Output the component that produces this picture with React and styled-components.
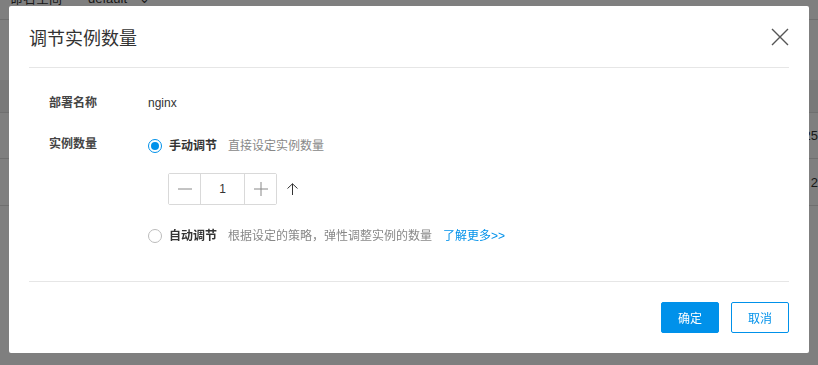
import React, { useState } from "react";
import styled, { createGlobalStyle } from "styled-components";

const GlobalStyle = createGlobalStyle`
  html, body {
    margin: 0;
    padding: 0;
    height: 100%;
    overflow: hidden;
    background: #ffffff;
    font-family: "Liberation Sans", "Noto Sans CJK SC", sans-serif;
  }
  * { box-sizing: border-box; }
`;

/* page under the mask */
const PageWrapper = styled.div`
  width: 818px;
  height: 365px;
  background: #ffffff;
  overflow: hidden;
`;

const FilterBar = styled.div`
  display: flex;
  align-items: flex-start;
  height: 20px;
  padding-left: 10px;
  border-bottom: 1px solid #dedede;
  font-size: 13px;
  color: #333;
  line-height: 14px;
`;

const FilterText = styled.span`
  margin-top: -8px;
  margin-right: ${(p) => p.mr || 0}px;
`;

const TableHead = styled.div`
  margin-top: 60px;
  height: 33px;
  background: #f2f2f2;
  border-bottom: 1px solid #dedede;
`;

const TableRow = styled.div`
  display: flex;
  justify-content: flex-end;
  align-items: center;
  height: ${(p) => p.h}px;
  border-bottom: 1px solid #dedede;
  font-size: 13px;
  color: #333;
`;

/* modal */
const Mask = styled.div`
  position: fixed;
  inset: 0;
  background: rgba(0, 0, 0, 0.5);
  display: flex;
  align-items: flex-start;
  padding: 6px 0 0 9px;
`;

const Modal = styled.div`
  width: 800px;
  height: 347px;
  background: #ffffff;
  border-radius: 2px;
  display: flex;
  flex-direction: column;
`;

const ModalHeader = styled.div`
  display: flex;
  justify-content: space-between;
  align-items: center;
  height: 62px;
  margin: 0 20px;
  border-bottom: 1px solid #e6e6e6;
`;

const Title = styled.h2`
  margin: 0;
  font-size: 18px;
  font-weight: 400;
  color: #333;
`;

const CloseButton = styled.button`
  display: flex;
  padding: 0;
  border: none;
  background: none;
  cursor: pointer;
`;

const ModalBody = styled.div`
  flex: 1;
  display: flex;
  flex-direction: column;
  gap: 21px;
  margin: 0 20px;
  padding: 25px 0 0 20px;
  border-bottom: 1px solid #e6e6e6;
`;

const FormRow = styled.div`
  display: flex;
  align-items: flex-start;
  font-size: 12px;
  line-height: 20px;
`;

const Label = styled.div`
  width: 99px;
  flex-shrink: 0;
  font-weight: 700;
  color: #444;
`;

const Value = styled.div`
  color: #333;
`;

const Options = styled.div`
  display: flex;
  flex-direction: column;
  padding-top: 2px;
`;

const RadioOption = styled.label`
  display: flex;
  align-items: center;
  height: 20px;
  margin-top: ${(p) => p.mt || 0}px;
  cursor: pointer;
`;

const RadioCircle = styled.span`
  width: 14px;
  height: 14px;
  border-radius: 50%;
  border: 1px solid ${(p) => (p.checked ? "#0091ea" : "#bbbbbb")};
  margin-right: 7px;
  display: flex;
  align-items: center;
  justify-content: center;

  &::after {
    content: "";
    width: 8px;
    height: 8px;
    border-radius: 50%;
    background: ${(p) => (p.checked ? "#0091ea" : "transparent")};
  }
`;

const OptionName = styled.span`
  font-weight: 700;
  color: #333;
`;

const OptionDesc = styled.span`
  margin-left: 11px;
  color: #888;
`;

const MoreLink = styled.a`
  margin-left: 11px;
  color: #0091ea;
  text-decoration: none;
`;

const StepperRow = styled.div`
  display: flex;
  align-items: center;
  margin: 17px 0 0 20px;
`;

const Stepper = styled.div`
  display: flex;
  height: 32px;
  border: 1px solid #d9d9d9;
  border-radius: 2px;
`;

const StepButton = styled.button`
  width: ${(p) => p.w}px;
  display: flex;
  align-items: center;
  justify-content: center;
  padding: 0;
  border: none;
  background: #fff;
  cursor: pointer;
`;

const StepInput = styled.input`
  width: 45px;
  border: none;
  border-left: 1px solid #d9d9d9;
  border-right: 1px solid #d9d9d9;
  text-align: center;
  font-size: 12px;
  font-family: inherit;
  color: #333;
  outline: none;
`;

const SortIcon = styled.span`
  display: flex;
  margin-left: 10px;
`;

const ModalFooter = styled.div`
  display: flex;
  justify-content: flex-end;
  gap: 12px;
  padding: 20px;
`;

const Button = styled.button`
  width: 58px;
  height: 31px;
  border-radius: 2px;
  font-size: 12px;
  font-family: inherit;
  cursor: pointer;
  border: 1px solid #0091ea;
  background: ${(p) => (p.primary ? "#0091ea" : "#ffffff")};
  color: ${(p) => (p.primary ? "#ffffff" : "#0091ea")};
`;

const App = () => {
  const [mode, setMode] = useState("manual");
  const [count, setCount] = useState(1);

  return (
    <>
      <GlobalStyle />
      <PageWrapper>
        <FilterBar>
          <FilterText mr={26}>命名空间</FilterText>
          <FilterText mr={12}>default</FilterText>
          <FilterText>⌄</FilterText>
        </FilterBar>
        <TableHead />
        <TableRow h={46}>25</TableRow>
        <TableRow h={47}>2</TableRow>
      </PageWrapper>

      <Mask>
        <Modal>
          <ModalHeader>
            <Title>调节实例数量</Title>
            <CloseButton aria-label="close">
              <svg width="18" height="18" viewBox="0 0 18 18">
                <path d="M1 1L17 17M17 1L1 17" stroke="#555" strokeWidth="1.4" fill="none" />
              </svg>
            </CloseButton>
          </ModalHeader>

          <ModalBody>
            <FormRow>
              <Label>部署名称</Label>
              <Value>nginx</Value>
            </FormRow>
            <FormRow>
              <Label>实例数量</Label>
              <Options>
                <RadioOption onClick={() => setMode("manual")}>
                  <RadioCircle checked={mode === "manual"} />
                  <OptionName>手动调节</OptionName>
                  <OptionDesc>直接设定实例数量</OptionDesc>
                </RadioOption>
                <StepperRow>
                  <Stepper>
                    <StepButton w={31} onClick={() => setCount(Math.max(0, count - 1))}>
                      <svg width="14" height="14" viewBox="0 0 14 14">
                        <path d="M0 7H14" stroke="#888" strokeWidth="1" />
                      </svg>
                    </StepButton>
                    <StepInput value={count} readOnly />
                    <StepButton w={31} onClick={() => setCount(count + 1)}>
                      <svg width="14" height="14" viewBox="0 0 14 14">
                        <path d="M0 7H14M7 0V14" stroke="#888" strokeWidth="1" />
                      </svg>
                    </StepButton>
                  </Stepper>
                  <SortIcon>
                    <svg width="11" height="12" viewBox="0 0 11 12">
                      <path d="M0.5 5.5L5.5 0.8L10.5 5.5M5.5 0.8V12" stroke="#333" strokeWidth="1" fill="none" />
                    </svg>
                  </SortIcon>
                </StepperRow>
                <RadioOption mt={21} onClick={() => setMode("auto")}>
                  <RadioCircle checked={mode === "auto"} />
                  <OptionName>自动调节</OptionName>
                  <OptionDesc>根据设定的策略，弹性调整实例的数量</OptionDesc>
                  <MoreLink href="#">了解更多&gt;&gt;</MoreLink>
                </RadioOption>
              </Options>
            </FormRow>
          </ModalBody>

          <ModalFooter>
            <Button primary>确定</Button>
            <Button>取消</Button>
          </ModalFooter>
        </Modal>
      </Mask>
    </>
  );
};

export default App;
